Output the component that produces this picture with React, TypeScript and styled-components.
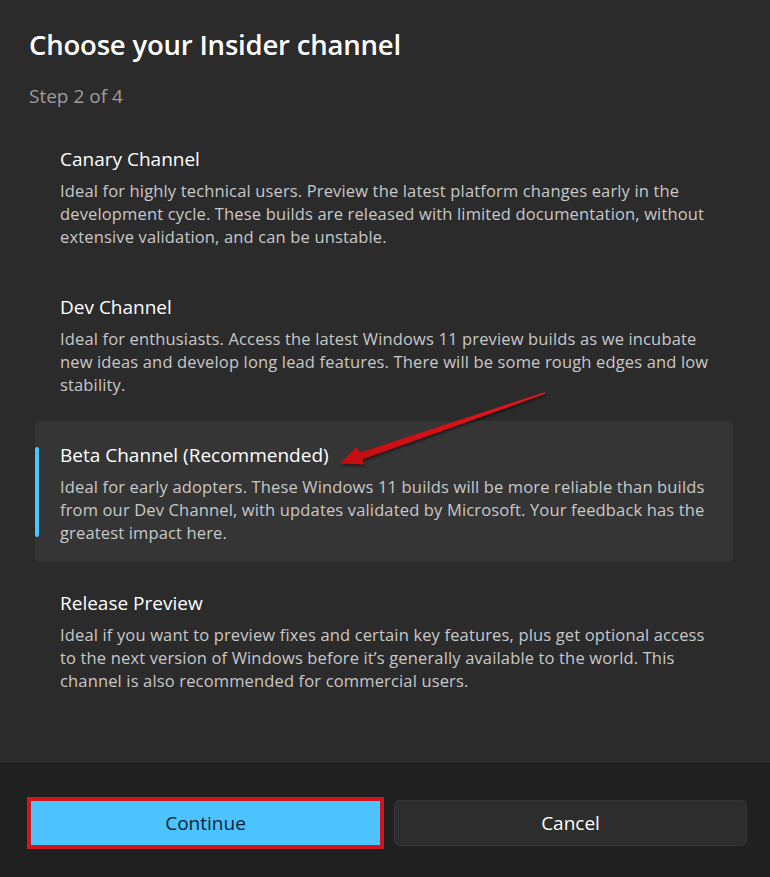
import React from "react";
import styled, { createGlobalStyle } from "styled-components";

const Global = createGlobalStyle`
  html, body { margin: 0; padding: 0; background: #2b2b2b; }
  body { font-family: "Open Sans", "Noto Sans", sans-serif; -webkit-font-smoothing: antialiased; }
  * { box-sizing: border-box; }
`;

const Page = styled.div`
  position: relative;
  width: 770px;
  height: 877px;
  display: flex;
  flex-direction: column;
  background: #2b2b2b;
  overflow: hidden;
`;

const Content = styled.div`
  flex: 1;
  padding: 27px 37px 0 29px;
  display: flex;
  flex-direction: column;
`;

const Title = styled.h1`
  margin: 0;
  font-size: 27.5px;
  line-height: 36px;
  font-weight: 600;
  color: #ffffff;
  letter-spacing: -0.2px;
`;

const Step = styled.div`
  margin-top: 19px;
  font-size: 19px;
  line-height: 28px;
  color: #9d9d9d;
`;

const List = styled.div`
  margin: 15px 0 0 6px;
  display: flex;
  flex-direction: column;
  gap: 7px;
`;

const Item = styled.div<{ $selected?: boolean }>`
  position: relative;
  height: 141px;
  padding: 21px 20px 0 25px;
  border-radius: 6px;
  background: ${(p) => (p.$selected ? "#353535" : "transparent")};
`;

const Accent = styled.span`
  position: absolute;
  left: 0;
  top: 26px;
  width: 4px;
  height: 90px;
  border-radius: 2px;
  background: #4cc2ff;
`;

const ItemTitle = styled.div`
  font-size: 19px;
  line-height: 26px;
  color: #ffffff;
`;

const Desc = styled.div`
  margin-top: 7px;
  font-size: 16.5px;
  line-height: 23px;
  letter-spacing: 0.15px;
  color: #c8c8c8;
`;

const Line = styled.div`
  white-space: nowrap;
`;

const Footer = styled.div`
  height: 114px;
  background: #202020;
  border-top: 1px solid #1a1a1a;
  padding: 36px 23px 0 30px;
  display: flex;
  gap: 13px;
`;

const Button = styled.button<{ $primary?: boolean }>`
  flex: 1;
  height: 46px;
  border-radius: ${(p) => (p.$primary ? "0" : "5px")};
  font-family: "Open Sans", "Noto Sans", sans-serif;
  font-size: 19px;
  cursor: pointer;
  background: ${(p) => (p.$primary ? "#4cc2ff" : "#2d2d2d")};
  color: ${(p) => (p.$primary ? "#0a1f33" : "#ffffff")};
  border: ${(p) => (p.$primary ? "none" : "1px solid #353535")};
  outline: ${(p) => (p.$primary ? "4px solid #d0161c" : "none")};
  outline-offset: -1px;
`;

const Overlay = styled.svg`
  position: absolute;
  left: 0;
  top: 0;
  pointer-events: none;
  filter: drop-shadow(1px 2px 1px rgba(0, 0, 0, 0.45));
`;

const channels = [
  {
    title: "Canary Channel",
    lines: [
      "Ideal for highly technical users. Preview the latest platform changes early in the",
      "development cycle. These builds are released with limited documentation, without",
      "extensive validation, and can be unstable.",
    ],
  },
  {
    title: "Dev Channel",
    lines: [
      "Ideal for enthusiasts. Access the latest Windows 11 preview builds as we incubate",
      "new ideas and develop long lead features. There will be some rough edges and low",
      "stability.",
    ],
  },
  {
    title: "Beta Channel (Recommended)",
    selected: true,
    lines: [
      "Ideal for early adopters. These Windows 11 builds will be more reliable than builds",
      "from our Dev Channel, with updates validated by Microsoft. Your feedback has the",
      "greatest impact here.",
    ],
  },
  {
    title: "Release Preview",
    lines: [
      "Ideal if you want to preview fixes and certain key features, plus get optional access",
      "to the next version of Windows before it\u2019s generally available to the world. This",
      "channel is also recommended for commercial users.",
    ],
  },
];

function Arrow() {
  return (
    <Overlay width={770} height={877} viewBox="0 0 770 877">
      <defs>
        <linearGradient id="ar" x1="0" y1="0" x2="1" y2="0">
          <stop offset="0" stopColor="#c40d12" />
          <stop offset="1" stopColor="#e8151b" />
        </linearGradient>
      </defs>
      <polygon
        points="544.7,392.2 545.3,393.8 362.2,459.5 364.5,464.5 340,463.5 356.5,447.0 360.2,452.6"
        fill="url(#ar)"
      />
    </Overlay>
  );
}

export default function App() {
  return (
    <Page>
      <Global />
      <Content>
        <Title>Choose your Insider channel</Title>
        <Step>Step 2 of 4</Step>
        <List>
          {channels.map((c) => (
            <Item key={c.title} $selected={c.selected}>
              {c.selected && <Accent />}
              <ItemTitle>{c.title}</ItemTitle>
              <Desc>
                {c.lines.map((l) => (
                  <Line key={l}>{l}</Line>
                ))}
              </Desc>
            </Item>
          ))}
        </List>
      </Content>
      <Footer>
        <Button $primary>Continue</Button>
        <Button>Cancel</Button>
      </Footer>
      <Arrow />
    </Page>
  );
}
